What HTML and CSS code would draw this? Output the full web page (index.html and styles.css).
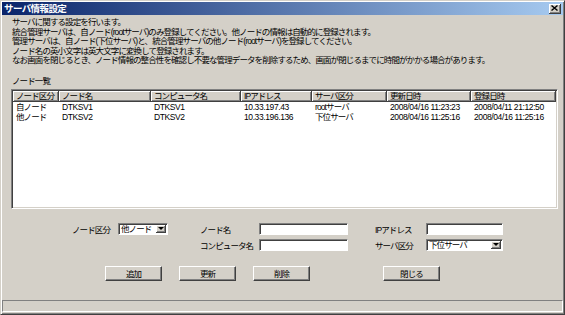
FILE: index.html
```html
<!DOCTYPE html>
<html lang="ja">
<head>
    <meta charset="UTF-8">
    <title>サーバ情報設定</title>
    <link rel="stylesheet" href="styles.css">
</head>
<body>
    <div class="window">
        <div class="titlebar">
            <span class="title">サーバ情報設定</span>
            <div class="close-x">
                <svg width="7" height="6" viewBox="0 0 7 6">
                    <path d="M0.5 0.5 L6.5 5.5 M6.5 0.5 L0.5 5.5" stroke="#000" stroke-width="1.4"/>
                </svg>
            </div>
        </div>

        <div class="content">
            <div class="intro">
                <p>サーバに関する設定を行います。</p>
                <p>統合管理サーバは、自ノード(rootサーバ)のみ登録してください。他ノードの情報は自動的に登録されます。</p>
                <p>管理サーバは、自ノード(下位サーバ)と、統合管理サーバの他ノード(rootサーバ)を登録してください。</p>
                <p>ノード名の英小文字は英大文字に変換して登録されます。</p>
                <p>なお画面を閉じるとき、ノード情報の整合性を確認し不要な管理データを削除するため、画面が閉じるまでに時間がかかる場合があります。</p>
            </div>

            <div class="list-label">ノード一覧</div>

            <div class="listbox">
                <table>
                    <colgroup>
                        <col style="width:46px">
                        <col style="width:92px">
                        <col style="width:90px">
                        <col style="width:71px">
                        <col style="width:75px">
                        <col style="width:84px">
                        <col>
                    </colgroup>
                    <thead>
                        <tr>
                            <th>ノード区分</th>
                            <th>ノード名</th>
                            <th>コンピュータ名</th>
                            <th>IPアドレス</th>
                            <th>サーバ区分</th>
                            <th>更新日時</th>
                            <th>登録日時</th>
                        </tr>
                    </thead>
                    <tbody>
                        <tr>
                            <td>自ノード</td>
                            <td class="en">DTKSV1</td>
                            <td class="en">DTKSV1</td>
                            <td class="en">10.33.197.43</td>
                            <td>rootサーバ</td>
                            <td class="en">2008/04/16 11:23:23</td>
                            <td class="en">2008/04/11 21:12:50</td>
                        </tr>
                        <tr>
                            <td>他ノード</td>
                            <td class="en">DTKSV2</td>
                            <td class="en">DTKSV2</td>
                            <td class="en">10.33.196.136</td>
                            <td>下位サーバ</td>
                            <td class="en">2008/04/16 11:25:16</td>
                            <td class="en">2008/04/16 11:25:16</td>
                        </tr>
                    </tbody>
                </table>
            </div>

            <div class="form">
                <label class="lbl-first">ノード区分</label>
                <div class="combo">
                    <span>他ノード</span>
                    <div class="arrow"></div>
                </div>
                <label class="lbl-mid">ノード名</label>
                <input type="text" class="field">
                <label class="lbl-last">IPアドレス</label>
                <input type="text" class="field">

                <div></div>
                <div></div>
                <label class="lbl-mid">コンピュータ名</label>
                <input type="text" class="field">
                <label class="lbl-last">サーバ区分</label>
                <div class="combo">
                    <span>下位サーバ</span>
                    <div class="arrow"></div>
                </div>
            </div>

            <div class="buttons">
                <button>追加</button>
                <button>更新</button>
                <button>削除</button>
                <button class="close-btn">閉じる</button>
            </div>
        </div>

        <div class="statusbar"></div>
    </div>
</body>
</html>
```

FILE: styles.css
```css
*, *::before, *::after{
    margin: 0;
    padding: 0;
    box-sizing: border-box;
}

body{
    background: #d4d0c8;
    font-family: "Liberation Sans", "Noto Sans CJK JP", sans-serif;
    font-size: 8.5px;
    letter-spacing: -0.9px;
    color: #000;
}

.window{
    width: 565px;
    height: 315px;
    background: #d4d0c8;
    border: 1px solid;
    border-color: #d4d0c8 #404040 #404040 #d4d0c8;
    box-shadow: inset 1px 1px #fff, inset -1px -1px #808080;
    padding: 1px;
    display: flex;
    flex-direction: column;
}

.titlebar{
    height: 13px;
    background: linear-gradient(to right, #0a246a, #a6caf0);
    display: flex;
    align-items: center;
    justify-content: space-between;
    padding: 0 2px;
}
.title{
    color: #fff;
    font-weight: bold;
    font-size: 9.5px;
    letter-spacing: -0.6px;
    line-height: 13px;
}
.close-x{
    width: 12px;
    height: 10px;
    background: #d4d0c8;
    border-right: 1px solid #404040;
    border-bottom: 1px solid #404040;
    box-shadow: inset 1px 1px #fff, inset -1px -1px #808080;
    display: flex;
    align-items: center;
    justify-content: center;
}
.close-x svg{
    display: block;
}

.content{
    flex: 1;
    display: flex;
    flex-direction: column;
    padding: 0 5px 0 9px;
}

.intro{
    margin-top: 3px;
    padding-left: 1px;
    line-height: 9.5px;
    white-space: nowrap;
}

.list-label{
    margin-top: 11px;
    padding-left: 1px;
    line-height: 9.5px;
}

.listbox{
    margin-top: 3px;
    height: 120px;
    background: #fff;
    border: 1px solid;
    border-color: #808080 #fff #fff #808080;
    box-shadow: inset 1px 1px #404040, inset -1px -1px #d4d0c8;
    padding: 1px;
    overflow: hidden;
}
.listbox table{
    width: 100%;
    table-layout: fixed;
    border-collapse: separate;
    border-spacing: 0;
}
.listbox th{
    height: 11px;
    line-height: 10px;
    padding: 0 3px;
    background: #d4d0c8;
    text-align: left;
    font-weight: normal;
    border-right: 1px solid #404040;
    border-bottom: 1px solid #404040;
    box-shadow: inset 1px 1px #fff, inset -1px -1px #808080;
    white-space: nowrap;
    overflow: hidden;
}
.listbox td{
    height: 10px;
    line-height: 10px;
    padding: 0 3px;
    white-space: nowrap;
    overflow: hidden;
}
.listbox td.en{
    letter-spacing: -0.4px;
}

.form{
    margin-top: 14px;
    display: grid;
    grid-template-columns: 107px 50px 91px 89px 78px 77px;
    grid-template-rows: 12px 12px;
    row-gap: 4px;
    align-items: center;
}
.lbl-first{
    text-align: right;
    padding-right: 8px;
}
.lbl-mid{
    padding-left: 32px;
}
.lbl-last{
    padding-left: 27px;
}
.field{
    width: 100%;
    height: 12px;
    background: #fff;
    border: 1px solid;
    border-color: #808080 #fff #fff #808080;
    box-shadow: inset 1px 1px #404040;
    outline: 0;
}
.combo{
    height: 12px;
    display: flex;
    align-items: center;
    background: #fff;
    border: 1px solid;
    border-color: #808080 #fff #fff #808080;
    box-shadow: inset 1px 1px #404040;
    padding: 1px 1px 1px 2px;
}
.combo span{
    flex: 1;
    line-height: 9px;
    white-space: nowrap;
}
.arrow{
    width: 10px;
    height: 8px;
    background: #d4d0c8;
    border-right: 1px solid #404040;
    border-bottom: 1px solid #404040;
    box-shadow: inset 1px 1px #fff, inset -1px -1px #808080;
    display: flex;
    align-items: center;
    justify-content: center;
}
.arrow::after{
    content: "";
    border-left: 3px solid transparent;
    border-right: 3px solid transparent;
    border-top: 3px solid #000;
}

.buttons{
    margin-top: 15px;
    display: flex;
    gap: 17px;
    padding-left: 94px;
}
.buttons button{
    width: 57px;
    height: 15px;
    background: #d4d0c8;
    border: 1px solid;
    border-color: #fff #404040 #404040 #fff;
    box-shadow: inset -1px -1px #808080;
    font: inherit;
    letter-spacing: -0.9px;
    line-height: 12px;
    color: #000;
}
.buttons .close-btn{
    margin-left: 56px;
}

.statusbar{
    height: 12px;
    margin-bottom: 1px;
    border: 1px solid;
    border-color: #808080 #fff #fff #808080;
}
```
